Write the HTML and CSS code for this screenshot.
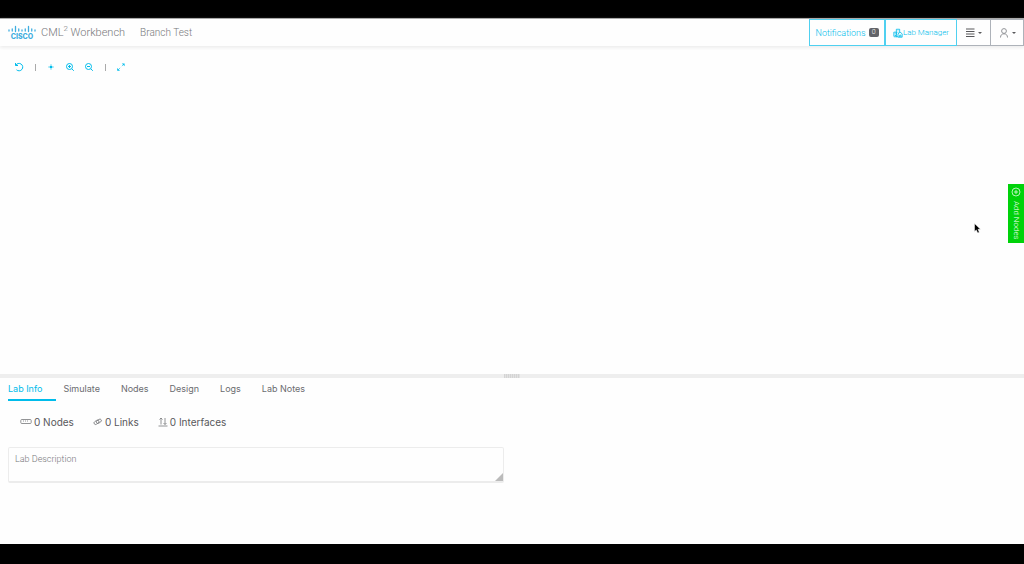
FILE: index.html
```html
<!DOCTYPE html>
<html lang="en">
<head>
    <meta charset="UTF-8">
    <meta name="viewport" content="width=device-width, initial-scale=1.0">
    <title>Branch Test - CML Workbench</title>
    <link rel="stylesheet" href="styles.css">
</head>
<body>

    <div class="app">
        <header class="header">
            <a class="brand" href="#">
                <svg class="logo" viewBox="0 0 28 8" aria-hidden="true">
                    <path d="M1 5v1M4.250 4v2M7.500 1.500v5M10.750 4v2M14 5v1M17.250 4v2M20.500 1.500v5M23.750 4v2M27 5v1"/>
                </svg>
                <span class="logo-name">CISCO</span>
            </a>
            <span class="product">CML<sup>2</sup> Workbench</span>
            <h1 class="lab-title">Branch Test</h1>

            <nav class="header-buttons">
                <button class="header-button notifications">Notifications <span class="badge">0</span></button>
                <button class="header-button manager">
                    <svg class="icon" viewBox="0 0 12 12" aria-hidden="true">
                        <path d="M1 10V5h3v6M4 8V1.500h4V5M2 7h1M2 9h2M5.500 3.500h1M5.500 5.500h1M6 11V7l2.500-2L11 7v4zM8 11V8.500h1.500V11M1 10.500h5"/>
                    </svg>Lab Manager
                </button>
                <button class="header-button menu" aria-label="Tools">
                    <svg class="icon" viewBox="0 0 10 10" aria-hidden="true">
                        <path d="M1 1h8.500M1 3.500h8.500M1 6h8.500M1 8.500h8.500" stroke-width="1.200"/>
                    </svg>
                    <span class="caret"></span>
                </button>
                <button class="header-button user" aria-label="User">
                    <svg class="icon" viewBox="0 0 10 10" aria-hidden="true">
                        <circle cx="5" cy="3" r="2.400"/>
                        <path d="M1.500 9.500C1.500 7 3 5.800 5 5.800S8.500 7 8.500 9.500"/>
                    </svg>
                    <span class="caret"></span>
                </button>
            </nav>
        </header>

        <main class="canvas">
            <div class="toolbar">
                <button class="tool" aria-label="Refresh">
                    <svg class="icon" viewBox="0 0 10 10"><path d="M1.500 1v2.500H4M1.800 3.300A3.700 3.700 0 1 1 2.500 7.800"/></svg>
                </button>
                <span class="separator"></span>
                <button class="tool" aria-label="Center">
                    <svg class="icon" viewBox="0 0 10 10"><path d="M5 2v6M2 5h6" stroke-width=".5"/><circle class="dot" cx="5" cy="5" r="1.300"/></svg>
                </button>
                <button class="tool" aria-label="Zoom in">
                    <svg class="icon" viewBox="0 0 10 10"><circle cx="4.500" cy="4.500" r="3"/><path d="M6.800 6.800l2 2M3 4.500h3M4.500 3v3"/></svg>
                </button>
                <button class="tool" aria-label="Zoom out">
                    <svg class="icon" viewBox="0 0 10 10"><circle cx="4.500" cy="4.500" r="3"/><path d="M6.800 6.800l2 2M3 4.500h3"/></svg>
                </button>
                <span class="separator"></span>
                <button class="tool" aria-label="Fit to screen">
                    <svg class="icon" viewBox="0 0 10 10"><path class="dot" d="M5.800 1.500h2.800v2.800zM1.200 6l2.800 2.800H1.200z"/><path d="M5.800 4.200l2-2M4.200 5.800l-2 2" stroke-width=".6"/></svg>
                </button>
            </div>

            <button class="add-nodes">
                <svg class="icon" viewBox="0 0 10 10" aria-hidden="true"><circle cx="5" cy="5" r="4"/><path d="M5 3v4M3 5h4"/></svg>
                Add Nodes
            </button>

            <svg class="pointer" viewBox="0 0 7 11" aria-hidden="true">
                <path d="M.5.500v8l1.800-1.600L3.700 10l1.600-.7-1.300-3h2.500z"/>
            </svg>
        </main>

        <div class="splitter"><span class="grip"></span></div>

        <section class="panel">
            <nav class="tabs">
                <a class="tab active" href="#info">Lab Info</a>
                <a class="tab" href="#simulate">Simulate</a>
                <a class="tab" href="#nodes">Nodes</a>
                <a class="tab" href="#design">Design</a>
                <a class="tab" href="#logs">Logs</a>
                <a class="tab" href="#notes">Lab Notes</a>
            </nav>

            <div class="stats">
                <div class="stat">
                    <svg class="icon wide" viewBox="0 0 12 10" aria-hidden="true"><rect x=".8" y="2.500" width="10.400" height="4" rx="1"/><path d="M3 4h1M5 4h1M7 4h1"/></svg>
                    0 Nodes
                </div>
                <div class="stat">
                    <svg class="icon" viewBox="0 0 10 10" aria-hidden="true"><rect x=".8" y="3.800" width="5.400" height="3" rx="1.500" transform="rotate(-35 3.500 5.300)"/><rect x="3.200" y="2.800" width="5.400" height="3" rx="1.500" transform="rotate(-35 5.900 4.300)"/></svg>
                    0 Links
                </div>
                <div class="stat">
                    <svg class="icon" viewBox="0 0 10 10" aria-hidden="true"><path d="M3 7.500V1M1.500 2.500L3 1l1.500 1.500M7 1v6.500M5.500 6L7 7.500 8.500 6M.5 9h9"/></svg>
                    0 Interfaces
                </div>
            </div>

            <div class="description">
                <textarea placeholder="Lab Description" aria-label="Lab Description"></textarea>
                <svg class="resizer" viewBox="0 0 8 8" aria-hidden="true"><path d="M8 0v8H0z"/></svg>
            </div>
        </section>
    </div>

</body>
</html>
```

FILE: styles.css
```css
* {
    box-sizing: border-box;
}

body {
    margin: 0;
    background-color: #000;
    color: #58585b;
    font-family: Roboto, "Liberation Sans", sans-serif;
    font-size: 10px;
    font-weight: 300;
}

button,
textarea {
    font: inherit;
}

button {
    display: flex;
    align-items: center;
    justify-content: center;
    margin: 0;
    padding: 0;
    border: 0;
    background: none;
    color: #00bceb;
}

a {
    color: inherit;
    text-decoration: none;
}

.app {
    display: flex;
    flex-direction: column;
    height: 100vh;
    border-top: 18px solid #000;
    border-bottom: 20px solid #000;
    background-color: #fefefe;
}

.icon {
    flex: none;
    width: 10px;
    height: 10px;
    fill: none;
    stroke: currentColor;
    stroke-width: 1;
}

.icon.wide {
    width: 12px;
}

.icon .dot {
    fill: currentColor;
    stroke: none;
}

/* header */

.header {
    display: flex;
    align-items: center;
    height: 28px;
    padding-left: 8px;
    border-top: 1px solid #aaa;
    box-shadow: 0 2px 3px #eee;
    color: #77787b;
}

.brand {
    display: flex;
    flex-direction: column;
    align-items: center;
    width: 28px;
    margin-right: 5px;
    color: #3faee0;
}

.logo {
    width: 28px;
    height: 8px;
    fill: none;
    stroke: currentColor;
    stroke-width: 1.3;
    stroke-linecap: round;
}

.logo-name {
    font-family: Inter, sans-serif;
    font-size: 7px;
    font-weight: 800;
    line-height: 7px;
}

.product {
    font-size: 11px;
    line-height: 14px;
    white-space: nowrap;
}

.product sup {
    font-size: 8px;
    line-height: 0;
}

.lab-title {
    margin: 0 0 0 15px;
    font-size: 10px;
    font-weight: 300;
    white-space: nowrap;
}

.header-buttons {
    display: flex;
    align-self: stretch;
    margin-left: auto;
}

.header-button {
    border: 1px solid #4fd0f0;
    border-left-width: 0;
    font-size: 9px;
}

.notifications {
    gap: 3px;
    width: 76px;
    border-left-width: 1px;
}

.manager {
    width: 72px;
    font-size: 8px;
    border-left-width: 1px;
}

.badge {
    padding: 0 3px;
    border-radius: 2px;
    background-color: #626469;
    color: #fff;
    font-size: 7px;
    line-height: 9px;
}

.menu,
.user {
    gap: 3px;
    width: 34px;
    border-color: #adb2b9;
    color: #58585b;
}

.user {
    width: 33px;
}

.user .icon {
    color: #919397;
}

.caret {
    border: 2px solid transparent;
    border-top-color: currentColor;
    border-bottom: 0;
}

/* canvas */

.canvas {
    position: relative;
    flex: 1;
}

.toolbar {
    display: flex;
    align-items: center;
    gap: 9px;
    padding: 16px 14px;
}

.separator {
    width: 1px;
    height: 7px;
    margin: 0 1px 0 2px;
    background-color: #aaa;
}

.add-nodes {
    position: absolute;
    top: 138px;
    right: 0;
    gap: 4px;
    width: 16px;
    height: 59px;
    background-color: #00d20a;
    color: #fff;
    font-size: 8px;
    white-space: nowrap;
    writing-mode: vertical-rl;
}

.add-nodes .icon {
    stroke-width: .7;
}

.pointer {
    position: absolute;
    top: 177px;
    right: 43px;
    width: 7px;
    height: 11px;
    stroke: #fff;
    stroke-width: .5;
}

/* bottom panel */

.splitter {
    display: flex;
    justify-content: center;
    height: 4px;
    background-color: #eee;
}

.grip {
    width: 16px;
    background: repeating-linear-gradient(90deg, #d4d4d4 0 1px, #e2e2e2 1px 2px);
}

.panel {
    height: 166px;
    padding: 0 8px;
    font-family: Inter, "Liberation Sans", sans-serif;
    font-weight: 400;
}

.tabs {
    display: flex;
    gap: 7px;
    font-size: 9px;
    line-height: 21px;
    color: #6b6c70;
}

.tab {
    padding-right: 14px;
    border-bottom: 2px solid transparent;
}

.tab.active {
    border-color: #00bceb;
    color: #00bceb;
}

.stats {
    display: flex;
    gap: 19px;
    padding: 14px 12px 18px;
    line-height: 14px;
}

.stat {
    display: flex;
    align-items: center;
    gap: 2px;
}

.stat .icon {
    color: #77787b;
    stroke-width: .8;
}

.description {
    position: relative;
    width: calc(50% - 8px);
}

.description textarea {
    display: block;
    width: 100%;
    height: 36px;
    padding: 5px 6px;
    border: 1px solid #ececec;
    border-bottom-width: 2px;
    border-radius: 2px;
    background-color: #fefefe;
    font-family: Roboto, "Liberation Sans", sans-serif;
    font-size: 9px;
    font-weight: 300;
    line-height: 12px;
    resize: none;
}

.description textarea::placeholder {
    color: #77787b;
}

.resizer {
    position: absolute;
    right: 1px;
    bottom: 2px;
    width: 8px;
    height: 8px;
    fill: #bbb;
}
```
